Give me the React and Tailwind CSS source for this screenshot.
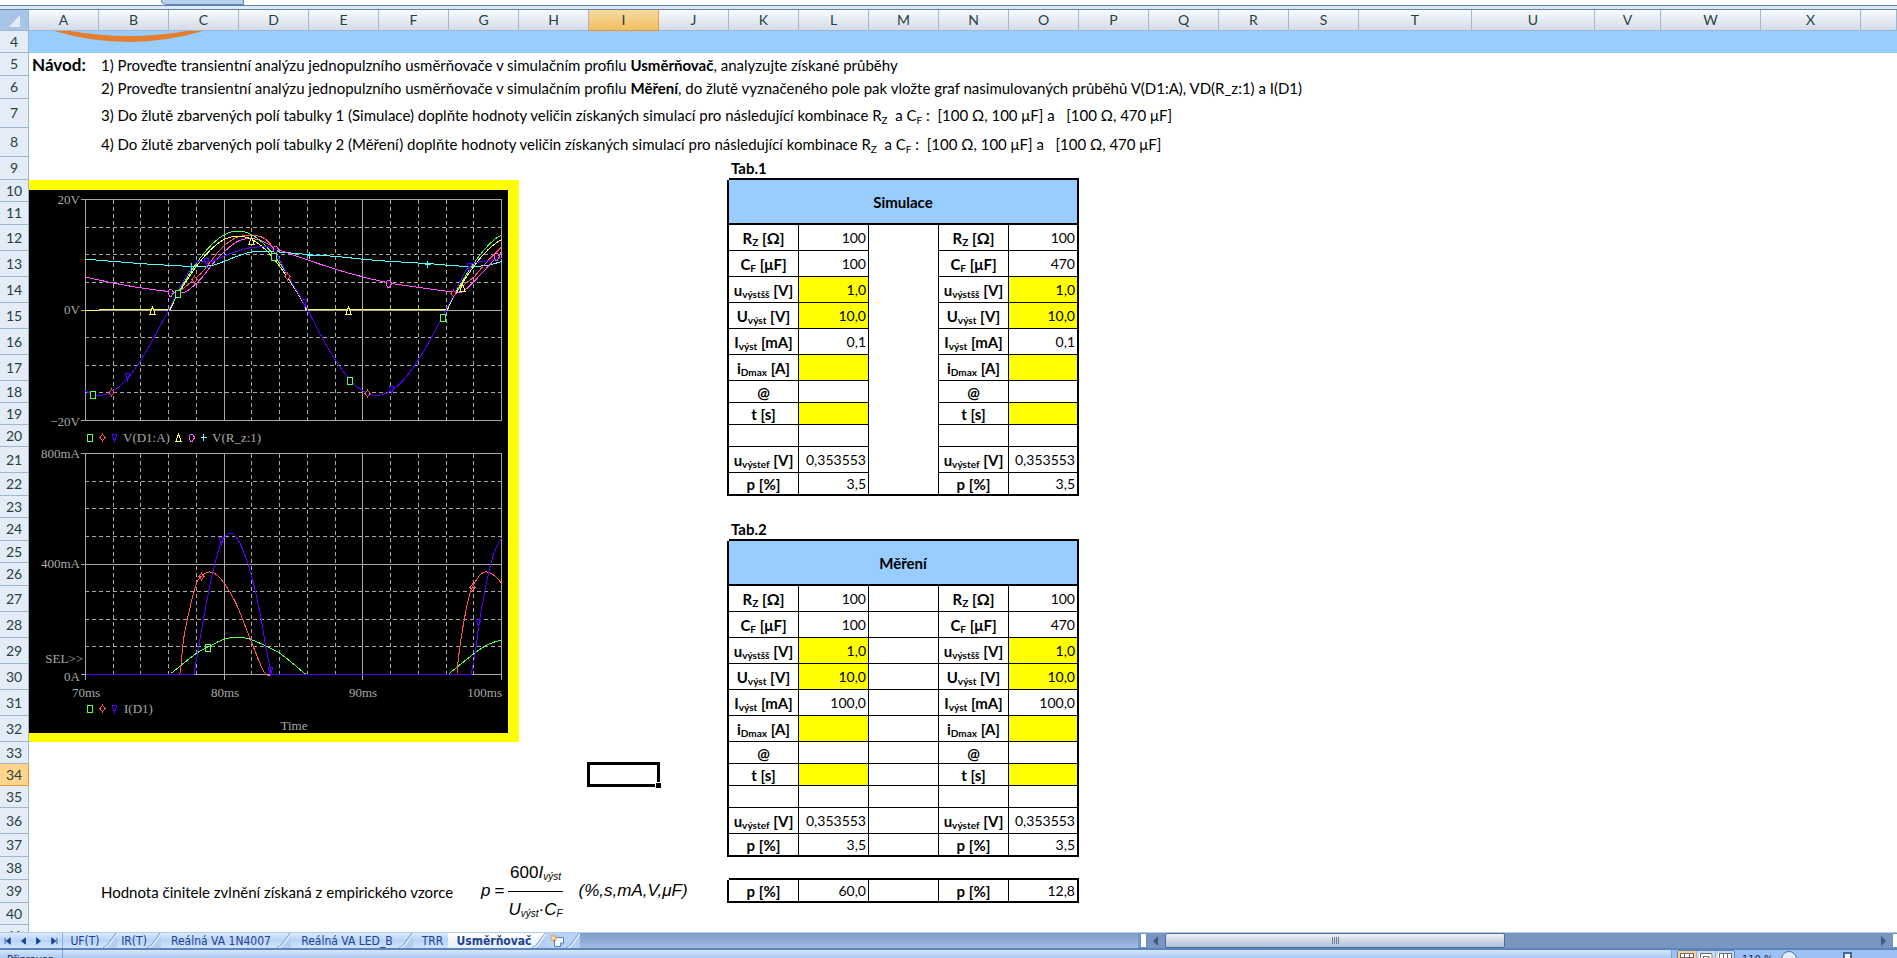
import React from "react";

const COLS = [
  ["A", "w-[70px]"], ["B", "w-[70px]"], ["C", "w-[70px]"], ["D", "w-[70px]"],
  ["E", "w-[70px]"], ["F", "w-[70px]"], ["G", "w-[70px]"], ["H", "w-[70px]"],
  ["I", "w-[70px]"], ["J", "w-[70px]"], ["K", "w-[70px]"], ["L", "w-[70px]"],
  ["M", "w-[70px]"], ["N", "w-[70px]"], ["O", "w-[70px]"], ["P", "w-[70px]"],
  ["Q", "w-[70px]"], ["R", "w-[70px]"], ["S", "w-[70px]"], ["T", "w-[113px]"],
  ["U", "w-[123px]"], ["V", "w-[66px]"], ["W", "w-[100px]"], ["X", "w-[100px]"],
  ["", ""],
];

const H22 = "h-[22px]";
const H23 = "h-[23px]";
const H26 = "h-[26px]";
const H29 = "h-[29px]";

/* ---------- chart ---------- */

const GREEN = "#55ff55";
const RED = "#ff5555";
const VIOLET = "#5500ff";
const YELLOW = "#ffff55";
const PINK = "#ff55ff";
const CYAN = "#55ffff";
const GREY = "#a8a8a8";

const tx = (t) => 56.5 + (t - 70) * 13.87;
const vy = (v) => 119.5 - v * 5.53;
const iy = (i) => 484.5 - i * 0.2765;

function smooth(points, yOf) {
  const p = points.map(([t, v]) => [tx(t), yOf(v)]);
  let d = `M${p[0][0].toFixed(1)} ${p[0][1].toFixed(1)}`;
  for (let k = 0; k < p.length - 1; k++) {
    const a = p[k - 1] || p[k];
    const b = p[k];
    const c = p[k + 1];
    const e = p[k + 2] || c;
    d += ` C${(b[0] + (c[0] - a[0]) / 6).toFixed(1)} ${(b[1] + (c[1] - a[1]) / 6).toFixed(1)} ${(c[0] - (e[0] - b[0]) / 6).toFixed(1)} ${(c[1] - (e[1] - b[1]) / 6).toFixed(1)} ${c[0].toFixed(1)} ${c[1].toFixed(1)}`;
  }
  return d;
}

function sine(from, to, amp) {
  const pts = [];
  for (let t = from; t <= to + 0.001; t += 0.25) pts.push([t, amp * Math.sin((Math.PI * (t - 76)) / 10)]);
  return pts;
}

const VOLTAGE = [
  [CYAN, [[70, 9.1], [72, 8.7], [74, 8.3], [76, 8], [77.7, 7.8], [79, 7.9], [80, 8.7], [81, 9.7], [82, 10.4], [83.1, 10.5], [84, 10.4], [86.2, 9.9], [88, 9.6], [90, 9.1], [92, 8.7], [94.7, 8.3], [96.7, 7.9], [98.2, 7.8], [99.2, 8.1], [100, 8.7]]],
  [PINK, [[70, 5.85], [72, 4.8], [74, 3.9], [76.2, 3.2], [77.1, 3.1], [77.9, 4.5], [78.5, 6.1], [79.4, 8.9], [80.7, 11.9], [81.6, 12.8], [82.6, 12.5], [83.7, 11.1], [84.7, 10.1], [88, 7.3], [90, 5.9], [91.9, 4.8], [94, 4], [96.4, 3.2], [97.1, 3.1], [97.8, 4.5], [98.4, 6.1], [100, 10.4]]],
  [RED, [[76.6, 3], [77, 3.7], [77.9, 5.6], [78.5, 7], [79.7, 10.8], [80.7, 12.8], [81.6, 13.4], [82.6, 13.2], [83.2, 12.2], [83.6, 10.8], [84.6, 6.1], [85.9, 0.3]]],
  [RED, [[96.6, 2.9], [97.3, 4.5], [98, 5.9], [98.9, 8.5], [100, 11.3]]],
  [YELLOW, [[70, -0.1], [76.1, 0]]],
  [YELLOW, [[76.1, 0], ...sine(76.5, 85.75, 13.3), [85.9, 0]]],
  [YELLOW, [[85.9, 0], [96.1, 0]]],
  [YELLOW, [[96.1, 0], ...sine(96.5, 100, 13.3)]],
  [GREEN, sine(76, 86, 14.2)],
  [GREEN, sine(96, 100, 14.2)],
  [VIOLET, sine(70, 76, 15.5)],
  [VIOLET, [[76, 0], [76.6, 3], [77.5, 7], [78.1, 8.6], [79.1, 8.7], [80, 9.7], [81, 10.6], [82, 11.2], [83.2, 11.3], [83.8, 9.9], [84.6, 6.1], [85.8, 1], [86, 0]]],
  [VIOLET, sine(86, 96, 15.5)],
  [VIOLET, [[96, 0], [96.6, 3], [97.3, 6.5], [97.7, 8], [98.2, 8.5], [99.2, 8.9], [100, 9.3]]],
];

const CURRENT = [
  [GREEN, [[76.2, 5], [78, 77], [78.9, 101], [80, 128], [81, 135], [82, 125], [83.1, 101], [84, 77], [84.8, 46], [85.9, 0]]],
  [GREEN, [[96.2, 3], [98, 75], [99, 108], [100, 125]]],
  [RED, [[76.8, 0], [76.9, 41], [77.1, 137], [77.5, 234], [78, 330], [78.4, 357], [78.8, 370], [79.3, 366], [80, 330], [80.9, 252], [82, 113], [82.9, 7], [83.4, 0]]],
  [RED, [[96.8, 5], [96.9, 65], [97.3, 198], [97.8, 306], [98.4, 357], [98.9, 371], [99.5, 357], [100, 330]]],
  [VIOLET, [[70, 0], [77.8, 0]]],
  [VIOLET, [[77.8, 0], [78, 53], [78.5, 198], [79.1, 354], [79.6, 451], [79.8, 481], [80.4, 511], [80.9, 494], [81.4, 445], [82.05, 342], [82.6, 216], [83, 101], [83.4, 2]]],
  [VIOLET, [[83.4, 0], [97.8, 0]]],
  [VIOLET, [[97.8, 0], [98.1, 77], [98.4, 192], [98.9, 330], [99.3, 414], [99.65, 463], [100, 493]]],
];

const SHAPES = {
  square: "M-2.5 -3.5H2.5V3.5H-2.5Z",
  diamond: "M0 -3.5L2.5 0L0 3.5L-2.5 0Z",
  down: "M-2.5 -3.5H2.5L0 3.5ZM0 3V5",
  up: "M0 -3.5L2.5 3.5H-2.5Z",
  circle: "M-1 -3.5H1L2.5 -1V1L1 3.5H-1L-2.5 1V-1Z",
  plus: "M0 -3.5V3.5M-3 0H3",
};

function Mark({ x, y, shape, color, solid }) {
  return (
    <path
      d={SHAPES[shape]}
      transform={`translate(${Math.round(x) - 0.5} ${Math.round(y) + 0.5})`}
      stroke={color}
      fill={solid && shape !== "plus" ? "#000" : "none"}
    />
  );
}

const V_MARKS = [
  [70.55, -15.3, "square", GREEN], [71.9, -14.9, "diamond", RED], [73.1, -12, "down", VIOLET],
  [74.9, 0, "up", YELLOW], [76.2, 3.2, "circle", PINK], [76.7, 3, "square", GREEN],
  [77.7, 7.8, "plus", CYAN], [77.9, 5.6, "diamond", RED], [78.75, 8.8, "down", VIOLET],
  [82, 12.5, "up", YELLOW], [83.7, 11, "circle", PINK], [83.6, 9.7, "square", GREEN],
  [84.6, 6.1, "diamond", RED], [85.8, 1.3, "down", VIOLET], [86.2, 9.9, "plus", CYAN],
  [89, -0.1, "up", YELLOW], [89.1, -12.7, "square", GREEN], [90.4, -15.1, "diamond", RED],
  [92.1, -14.4, "down", VIOLET], [91.85, 4.8, "circle", PINK], [94.7, 8.3, "plus", CYAN],
  [95.75, -1.3, "square", GREEN], [96.6, 2.9, "diamond", RED], [97.2, 4.1, "up", YELLOW],
  [97.7, 7.8, "down", VIOLET], [99.7, 9.7, "circle", PINK],
];

const I_MARKS = [
  [78.85, 101, "square", GREEN], [78.4, 355, "diamond", RED], [79.85, 485, "down", VIOLET],
  [83.35, 15, "down", VIOLET], [97.95, 316, "diamond", RED], [98.4, 190, "down", VIOLET],
];

function Grid({ top, bottom }) {
  const steps = [1, 2, 3, 4, 5, 6, 7];
  const h = (bottom - top) / 8;
  return (
    <g stroke={GREY} fill="none" shapeRendering="crispEdges">
      {steps.map((s) => (
        <path
          key={s}
          d={`M${s === 4 ? 52 : 56} ${Math.floor(top + s * h) + 0.5}H472`}
          strokeDasharray={s === 4 ? undefined : "4 3"}
        />
      ))}
      {Array.from({ length: 14 }, (_, k) => k + 1).map((k) => (
        <path
          key={k}
          d={`M${Math.floor(tx(70 + 2 * k)) + 0.5} ${top}V${bottom}`}
          strokeDasharray={k % 5 === 0 ? undefined : "4 3"}
        />
      ))}
      <path d={`M52 ${top}H472.5V${bottom}H52M56.5 ${top}V${bottom}`} />
    </g>
  );
}

function Traces({ list, yOf }) {
  return (
    <g fill="none" shapeRendering="crispEdges">
      {list.map(([color, pts], k) => (
        <path key={k} d={smooth(pts, yOf)} stroke={color} />
      ))}
    </g>
  );
}

function Chart() {
  return (
    <svg
      width="479"
      height="543"
      viewBox="0 0 479 543"
      role="img"
      aria-label="V(D1:A), V(R_z:1), I(D1)"
      className="block bg-black font-['Liberation_Serif',serif] text-[13px]"
    >
      <Grid top={9.5} bottom={230.5} />
      <Grid top={263.5} bottom={484.5} />
      <path d="M56.5 484V490M195.5 484V490M333.5 484V490M472.5 484V490" stroke={GREY} />
      <Traces list={VOLTAGE} yOf={vy} />
      <Traces list={CURRENT} yOf={iy} />
      <g shapeRendering="crispEdges">
        {V_MARKS.map(([t, v, shape, color], k) => (
          <Mark key={k} x={tx(t)} y={vy(v)} shape={shape} color={color} solid />
        ))}
        {I_MARKS.map(([t, i, shape, color], k) => (
          <Mark key={k} x={tx(t)} y={iy(i)} shape={shape} color={color} />
        ))}
        <Mark x={61} y={247} shape="square" color={GREEN} />
        <Mark x={74} y={247} shape="diamond" color={RED} />
        <Mark x={86} y={247} shape="down" color={VIOLET} />
        <Mark x={150} y={247} shape="up" color={YELLOW} />
        <Mark x={163} y={247} shape="circle" color={PINK} />
        <Mark x={175} y={247} shape="plus" color={CYAN} />
        <Mark x={61} y={518} shape="square" color={GREEN} />
        <Mark x={74} y={518} shape="diamond" color={RED} />
        <Mark x={86} y={518} shape="down" color={VIOLET} />
      </g>
      <g fill={GREY} textAnchor="end">
        <text x="51" y="14">20V</text>
        <text x="51" y="124">0V</text>
        <text x="51" y="236">−20V</text>
        <text x="51" y="268">800mA</text>
        <text x="51" y="378">400mA</text>
        <text x="54" y="473">SEL&gt;&gt;</text>
        <text x="51" y="491">0A</text>
        <text x="473" y="507">100ms</text>
      </g>
      <g fill={GREY} textAnchor="middle">
        <text x="57" y="507">70ms</text>
        <text x="196" y="507">80ms</text>
        <text x="334" y="507">90ms</text>
        <text x="265" y="540">Time</text>
      </g>
      <g fill={GREY}>
        <text x="94" y="252">V(D1:A)</text>
        <text x="183" y="252">V(R_z:1)</text>
        <text x="95" y="523">I(D1)</text>
      </g>
    </svg>
  );
}

/* ---------- sheet ---------- */

function Sub({ children }) {
  return <sub className="text-[10px]">{children}</sub>;
}

function Row({ n, h, active, children }) {
  return (
    <tr className={h}>
      <th
        scope="row"
        className={
          active
            ? "border-r border-b border-[#f29536] bg-[#ffd58d] p-0 text-center font-normal text-[#27413e]"
            : "border-r border-b border-[#9eb6ce] bg-[#e4ecf7] p-0 text-center font-normal text-[#27413e]"
        }
      >
        {n}
      </th>
      {children}
    </tr>
  );
}

const LABEL = "border-r border-b border-black p-0 text-center text-[15px] leading-5 font-bold whitespace-nowrap";
const LABEL_END = "border-r border-b-2 border-black p-0 text-center text-[15px] leading-5 font-bold whitespace-nowrap";

function valueClass(yellow, outer, last) {
  const base = "p-0 pr-[2px] text-right border-black ";
  return (
    base +
    (yellow ? "bg-[#ffff00] " : "") +
    (outer ? "border-r-2 " : "border-r ") +
    (last ? "border-b-2" : "border-b")
  );
}

function Measure({ label, a, b, yellow, last, middle }) {
  return (
    <>
      <td className="border-r-2 border-black p-0" />
      <th scope="row" className={last ? LABEL_END : LABEL}>{label}</th>
      <td className={valueClass(yellow, false, last)}>{a}</td>
      {middle}
      <th scope="row" className={last ? LABEL_END : LABEL}>{label}</th>
      <td className={valueClass(yellow, true, last)}>{b}</td>
      <td colSpan={10} />
    </>
  );
}

const LABELS = {
  rz: <>R<Sub>Z</Sub> [<span className="text-base leading-none">Ω</span>]</>,
  cf: <>C<Sub>F</Sub> [μF]</>,
  uss: <>u<Sub>výstšš</Sub> [V]</>,
  u: <>U<Sub>výst</Sub> [V]</>,
  i: <>I<Sub>výst</Sub> [mA]</>,
  id: <>i<Sub>Dmax</Sub> [A]</>,
  at: "@",
  t: "t [s]",
  none: "",
  uef: <>u<Sub>výstef</Sub> [V]</>,
  p: "p [%]",
};

const SIMULATION = [
  [12, H26, "rz", "100", "100"],
  [13, H26, "cf", "100", "470"],
  [14, H26, "uss", "1,0", "1,0", true],
  [15, H26, "u", "10,0", "10,0", true],
  [16, H26, "i", "0,1", "0,1"],
  [17, H26, "id", "", "", true],
  [18, H22, "at", "", ""],
  [19, H22, "t", "", "", true],
  [20, H22, "none", "", ""],
  [21, H26, "uef", "0,353553", "0,353553"],
  [22, H23, "p", "3,5", "3,5"],
];

const MEASUREMENT = [
  [27, H26, "rz", "100", "100"],
  [28, H26, "cf", "100", "470"],
  [29, H26, "uss", "1,0", "1,0", true],
  [30, H26, "u", "10,0", "10,0", true],
  [31, H26, "i", "100,0", "100,0"],
  [32, H26, "id", "", "", true],
  [33, H22, "at", "", ""],
  [34, H22, "t", "", "", true],
  [35, H22, "none", "", ""],
  [36, H26, "uef", "0,353553", "0,353553"],
  [37, H23, "p", "3,5", "3,5"],
];

const TITLE = "border-r-2 border-b-2 border-black bg-[#99ccff] p-0 text-center text-[15px] leading-5 font-bold";
const CAPTION = "border-b-2 border-black p-0 pl-[2px] text-[15px] leading-5 font-bold";
const NOTE = "p-0 pl-[2px] text-[15px] leading-5 whitespace-pre";

function Note({ sub, children }) {
  return (
    <>
      <td />
      <td colSpan={24} className={sub ? `${NOTE} pt-[3px]` : NOTE}>{children}</td>
    </>
  );
}

function Formula() {
  return (
    <div className="flex items-center pl-8 font-['Liberation_Sans',sans-serif] text-[17px] leading-5 whitespace-nowrap italic">
      <span>p</span>
      <span className="mx-1 not-italic">=</span>
      <span className="flex flex-col">
        <span className="border-b border-black pb-2 text-center">
          <span className="not-italic">600</span>I<sub className="text-[10px]">výst</sub>
        </span>
        <span className="pt-2">
          U<sub className="text-[10px]">výst</sub>·C<sub className="text-[10px]">F</sub>
        </span>
      </span>
      <span className="ml-4">(%,s,mA,V,μF)</span>
    </div>
  );
}

function Sheet() {
  return (
    <table className="w-full table-fixed border-separate border-spacing-0 bg-white font-[Lato,'Open_Sans',sans-serif] text-sm leading-5 text-black">
      <colgroup>
        <col className="w-[29px]" />
        {COLS.map(([name, w]) => (
          <col key={name} className={w} />
        ))}
      </colgroup>
      <thead>
        <tr className="h-[21px]">
          <th className="border-r border-b border-[#9eb6ce] bg-[#a9c4e9] p-0">
            <svg width="28" height="20" viewBox="0 0 28 20" className="block" aria-hidden="true">
              <path d="M20 5V17H9Z" fill="#e4ecf7" />
            </svg>
          </th>
          {COLS.map(([name]) => (
            <th
              key={name}
              scope="col"
              className={
                name === "I"
                  ? "border-r border-b border-[#f29536] bg-linear-to-b from-[#f9d99f] to-[#f1c15f] p-0 text-center font-normal text-[#27413e]"
                  : "border-r border-b border-[#9eb6ce] bg-linear-to-b from-[#f9fcfd] to-[#d3dbe9] p-0 text-center font-normal text-[#27413e]"
              }
            >
              {name}
            </th>
          ))}
        </tr>
      </thead>
      <tbody>
        <Row n={4} h={H22}>
          <td colSpan={25} className="bg-[#99ccff] p-0 align-top">
            <svg width="200" height="12" viewBox="0 0 200 12" className="block" aria-hidden="true">
              <path d="M25 0Q100 22 174 0H158Q100 10 42 0Z" fill="#e67d2c" />
            </svg>
          </td>
        </Row>
        <Row n={5} h={H23}>
          <td className="p-0 pl-[3px] text-[17px] leading-5 font-bold">Návod:</td>
          <td colSpan={24} className={NOTE}>
            1) Proveďte transientní analýzu jednopulzního usměrňovače v simulačním profilu <b>Usměrňovač</b>, analyzujte získané průběhy
          </td>
        </Row>
        <Row n={6} h={H23}>
          <Note>
            2) Proveďte transientní analýzu jednopulzního usměrňovače v simulačním profilu <b>Měření</b>, do žlutě vyznačeného pole pak vložte graf nasimulovaných průběhů V(D1:A), VD(R_z:1) a I(D1)
          </Note>
        </Row>
        <Row n={7} h={H29}>
          <Note sub>
            3) Do žlutě zbarvených polí tabulky 1 (Simulace) doplňte hodnoty veličin získaných simulací pro následující kombinace R<Sub>Z</Sub>{"  "}a C<Sub>F</Sub> :{"  "}[100 Ω, 100 μF] a{"   "}[100 Ω, 470 μF]
          </Note>
        </Row>
        <Row n={8} h={H29}>
          <Note sub>
            4) Do žlutě zbarvených polí tabulky 2 (Měření) doplňte hodnoty veličin získaných simulací pro následující kombinace R<Sub>Z</Sub>{"  "}a C<Sub>F</Sub> :{"  "}[100 Ω, 100 μF] a{"   "}[100 Ω, 470 μF]
          </Note>
        </Row>
        <Row n={9} h={H23}>
          <td colSpan={10} />
          <td colSpan={5} className={CAPTION}>Tab.1</td>
          <td colSpan={10} />
        </Row>
        <Row n={10} h={H22}>
          <td colSpan={7} rowSpan={23} className="bg-[#ffff00] p-0">
            <Chart />
          </td>
          <td colSpan={2} />
          <td className="border-r-2 border-black p-0" />
          <th colSpan={5} rowSpan={2} className={TITLE}>Simulace</th>
          <td colSpan={10} />
        </Row>
        <Row n={11} h={H23}>
          <td colSpan={2} />
          <td className="border-r-2 border-black p-0" />
          <td colSpan={10} />
        </Row>
        {SIMULATION.map(([n, h, key, a, b, yellow], k) => (
          <Row key={n} n={n} h={h}>
            <td colSpan={2} />
            <Measure
              label={LABELS[key]}
              a={a}
              b={b}
              yellow={yellow}
              last={n === 22}
              middle={k === 0 ? <td rowSpan={11} className="border-r border-b-2 border-black p-0" /> : null}
            />
          </Row>
        ))}
        <Row n={23} h={H22}>
          <td colSpan={18} />
        </Row>
        <Row n={24} h={H23}>
          <td colSpan={3} />
          <td colSpan={5} className={CAPTION}>Tab.2</td>
          <td colSpan={10} />
        </Row>
        <Row n={25} h={H22}>
          <td colSpan={2} />
          <td className="border-r-2 border-black p-0" />
          <th colSpan={5} rowSpan={2} className={TITLE}>Měření</th>
          <td colSpan={10} />
        </Row>
        <Row n={26} h={H23}>
          <td colSpan={2} />
          <td className="border-r-2 border-black p-0" />
          <td colSpan={10} />
        </Row>
        {MEASUREMENT.map(([n, h, key, a, b, yellow]) => (
          <Row key={n} n={n} h={h} active={n === 34}>
            {n > 32 && <td colSpan={7} />}
            {n === 34 ? (
              <>
                <td />
                <td className="relative p-0">
                  <div className="absolute -top-[2px] -right-px -bottom-px -left-[2px] border-3 border-black" />
                  <div className="absolute -right-[2px] -bottom-[2px] size-[6px] border-t border-l border-white bg-black" />
                </td>
              </>
            ) : (
              <td colSpan={2} />
            )}
            <Measure
              label={LABELS[key]}
              a={a}
              b={b}
              yellow={yellow}
              last={n === 37}
              middle={<td className={valueClass(false, false, n === 37)} />}
            />
          </Row>
        ))}
        <Row n={38} h={H23}>
          <td colSpan={6} />
          <td colSpan={3} rowSpan={3} className="p-0">
            <Formula />
          </td>
          <td />
          <td colSpan={5} className="border-b-2 border-black p-0" />
          <td colSpan={10} />
        </Row>
        <Row n={39} h={H23}>
          <td />
          <td colSpan={5} className={NOTE}>
            Hodnota činitele zvlnění získaná z empirického vzorce
          </td>
          <Measure
            label={LABELS.p}
            a="60,0"
            b="12,8"
            last
            middle={<td className={valueClass(false, false, true)} />}
          />
        </Row>
        <Row n={40} h={H22}>
          <td colSpan={6} />
          <td colSpan={16} />
        </Row>
        <Row n={41} h={H22}>
          <td colSpan={25} />
        </Row>
      </tbody>
    </table>
  );
}

/* ---------- bars ---------- */

function Slant() {
  return (
    <svg width="14" height="15" viewBox="0 0 14 15" className="shrink-0" aria-hidden="true">
      <path d="M0 15L4 13L14 0V15Z" fill="#b5cdee" />
      <path d="M0 14.5Q3 14 5 11L13 0" fill="none" stroke="#7f9fc9" />
      <path d="M1.5 15Q4.500 14 6.500 11.500L14 1" fill="none" stroke="#fff" />
    </svg>
  );
}

const TABS = [
  ["UF(T)", "w-[54px]"],
  ["IR(T)", "w-[44px]"],
  ["Reálná VA 1N4007", "w-[130px]"],
  ["Reálná VA LED_B", "w-[122px]"],
  ["TRR", "w-[35px]"],
];

const NAV = [
  ["První list", "M2.500 1V9M9 1L4 5L9 9Z"],
  ["Předchozí list", "M8 1L3 5L8 9Z"],
  ["Další list", "M3 1L8 5L3 9Z"],
  ["Poslední list", "M8.500 1V9M2 1L7 5L2 9Z"],
];

function TabBar() {
  return (
    <div className="flex h-4 shrink-0 items-stretch border-t border-[#b3cdf0] bg-linear-to-b from-[#7f9dca] to-[#a0bbe2]">
      <div className="flex w-3/5 min-w-0 items-stretch overflow-hidden font-['DejaVu_Sans_Condensed','DejaVu_Sans',sans-serif] text-xs leading-4 text-[#1e4191]">
        <div className="flex w-[63px] shrink-0 items-center justify-around border-r border-[#8ba9d6] bg-linear-to-b from-[#dce9fb] via-[#b8d3f8] to-[#d3e4fb]">
          {NAV.map(([name, d]) => (
            <button key={name} type="button" aria-label={name} className="flex">
              <svg width="9" height="8" viewBox="0 0 11 10" fill="#15428b" stroke="#15428b" aria-hidden="true">
                <path d={d} strokeWidth="1" />
              </svg>
            </button>
          ))}
        </div>
        {TABS.map(([name, w]) => (
          <button
            key={name}
            type="button"
            className={`flex shrink-0 items-stretch bg-linear-to-b from-[#dce9fb] via-[#b8d3f8] to-[#d3e4fb] pl-1 whitespace-nowrap ${w}`}
          >
            <span className="min-w-0 flex-1 text-center">{name}</span>
            {name !== "TRR" && <Slant />}
          </button>
        ))}
        <button type="button" className="flex w-[98px] shrink-0 items-stretch bg-linear-to-b from-white to-[#e4eefc] pl-2 font-bold whitespace-nowrap">
          <span className="flex-1 text-center">Usměrňovač</span>
          <Slant />
        </button>
        <button type="button" aria-label="Vložit list" className="flex w-[34px] shrink-0 items-stretch bg-[#b8d3f8]">
          <svg width="20" height="15" viewBox="0 0 20 15" aria-hidden="true">
            <path d="M8.500 4.500H17.500V10L14.500 13.500H8.500Z" fill="#f4f8fe" stroke="#5a7fb5" />
            <path d="M17.500 10H14.500V13.500" fill="#c5d8f1" stroke="#5a7fb5" />
            <path d="M7.500 1V9M3.500 5H11.500M4.500 2L10.500 8M10.500 2L4.500 8" stroke="#e8962a" />
            <circle cx="7.500" cy="5" r="1.500" fill="#fff3c0" />
          </svg>
          <Slant />
        </button>
      </div>
      <div className="flex min-w-0 flex-1 items-stretch bg-[#7896c0]">
        <div className="ml-[2px] w-[7px] shrink-0 border border-[#6f8fbd] bg-white" />
        <button type="button" aria-label="Posunout vlevo" className="flex w-[18px] shrink-0 items-center justify-center">
          <svg width="6" height="10" viewBox="0 0 6 10" aria-hidden="true"><path d="M5 0V10L0 5Z" fill="#43567c" /></svg>
        </button>
        <div className="flex min-w-0 flex-1">
          <div className="flex w-[48%] items-center justify-center gap-px rounded-[2px] border border-[#4e6a99] bg-linear-to-b from-[#f0f2f7] via-[#cfd7e4] via-50% to-[#b3c2d8]">
            <span className="h-[7px] w-px bg-[#6f7f99]" />
            <span className="h-[7px] w-px bg-[#6f7f99]" />
            <span className="h-[7px] w-px bg-[#6f7f99]" />
            <span className="h-[7px] w-px bg-[#6f7f99]" />
          </div>
        </div>
        <button type="button" aria-label="Posunout vpravo" className="flex w-[18px] shrink-0 items-center justify-center">
          <svg width="6" height="10" viewBox="0 0 6 10" aria-hidden="true"><path d="M1 0V10L6 5Z" fill="#43567c" /></svg>
        </button>
        <div className="w-[5px] shrink-0 border border-r-0 border-[#6f8fbd] bg-white" />
      </div>
    </div>
  );
}

const VIEWS = [
  ["Normálně", "M2 2.500H16M2 6.500H16M6.500 3V10M11.500 3V10M2.500 2V10M15.500 2V10"],
  ["Rozložení stránky", "M3 2.500H15V12M3.500 3V12M6 5.500H12V12M6.500 6V12"],
  ["Konce stránek", "M3 2.500H15M3.500 3V12M7.500 3V12M11.500 3V12M15.500 2V12"],
];

function StatusBar() {
  return (
    <div className="h-[10px] shrink-0 overflow-hidden border-t-2 border-[#5c85bd] bg-linear-to-b from-[#d6e5f9] to-[#a9cbf7] font-['DejaVu_Sans_Condensed','DejaVu_Sans',sans-serif] text-[11px] text-[#15294f]">
      <div className="flex h-6 items-start">
        <span className="w-[63px] border-r border-[#7fa2d3] pt-[2px] pl-[7px] leading-4 whitespace-nowrap">Připraven</span>
        <span className="flex-1" />
        <div className="flex w-[226px] items-start border-l border-[#7fa2d3] bg-[#9dc0f2] pl-[5px]">
          <div className="flex rounded-t-[2px] border border-[#5b81bb] bg-[#c8dbf5]">
            {VIEWS.map(([name, d], k) => (
              <button key={name} type="button" aria-label={name} className={k === 0 ? "bg-[#f8cf95]" : "border-l border-[#9ab6de]"}>
                <svg width="18" height="12" viewBox="0 0 18 12" fill="none" stroke="#6b6b6b" aria-hidden="true">
                  <path d="M2 2H16V12H2Z" fill="#fff" stroke="none" />
                  <path d={d} />
                </svg>
              </button>
            ))}
          </div>
          <span className="w-[46px] pt-[2px] pl-[7px] leading-4 whitespace-nowrap">110 %</span>
          <button type="button" aria-label="Oddálit" className="mt-px ml-px size-4 shrink-0 rounded-full border border-[#4c72ad] bg-[#e3edfb]" />
          <input
            type="range"
            aria-label="Lupa"
            defaultValue="50"
            className="h-4 w-[102px] min-w-0 appearance-none bg-transparent [&::-webkit-slider-thumb]:h-3 [&::-webkit-slider-thumb]:w-[9px] [&::-webkit-slider-thumb]:appearance-none [&::-webkit-slider-thumb]:border-2 [&::-webkit-slider-thumb]:border-[#3f66a5] [&::-webkit-slider-thumb]:bg-white"
          />
        </div>
      </div>
    </div>
  );
}

export default function App() {
  return (
    <div className="flex h-screen flex-col overflow-hidden bg-white">
      <header className="shrink-0">
        <div className="flex h-[6px] items-start border-b border-[#6083b0] bg-white pl-[161px]">
          <div className="h-[5px] w-[83px] rounded-bl-lg border-r border-b border-l border-[#6083b0] bg-[#b7cff0]" />
        </div>
        <div className="h-1 border-b border-[#6083b0] bg-[#dfe8f5]" />
      </header>
      <main className="min-h-0 flex-1 overflow-hidden">
        <Sheet />
      </main>
      <TabBar />
      <StatusBar />
    </div>
  );
}
